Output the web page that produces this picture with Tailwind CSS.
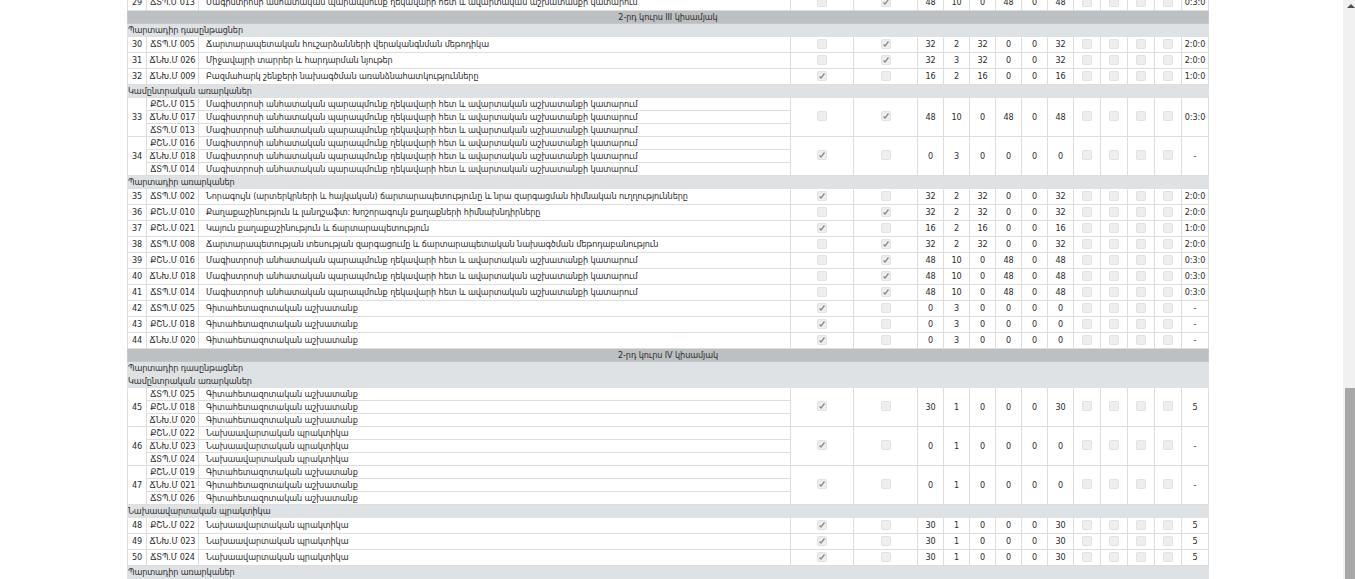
<!DOCTYPE html>
<html lang="hy">
<head>
    <meta charset="UTF-8">
    <title>Ուսումնական պլան</title>
    <script src="https://cdn.jsdelivr.net/npm/@tailwindcss/browser@4"></script>
</head>
<body class="h-screen overflow-hidden bg-white font-['DejaVu_Sans_Condensed','DejaVu_Sans',sans-serif] text-[9px] tracking-[-0.08px] text-[#2b2b2b]">
<div class="flex h-[579px]">
    <div class="h-[579px] w-[1343px] flex-none overflow-hidden pl-[127px]">
        <table class="-mt-[6px] w-[1081px] table-fixed border-collapse">
            <colgroup>
                <col class="w-[19px]"><col class="w-[52px]"><col class="w-[592px]"><col class="w-[63px]"><col class="w-[64px]">
                <col class="w-[26px]"><col class="w-[26px]"><col class="w-[26px]"><col class="w-[26px]"><col class="w-[26px]"><col class="w-[26px]">
                <col class="w-[27px]"><col class="w-[27px]"><col class="w-[27px]"><col class="w-[27px]"><col class="w-[27px]">
            </colgroup>
            <tbody id="plan"></tbody>
        </table>
    </div>
    <div class="relative h-[579px] w-[12px] flex-none bg-[#f1f1f1]">
        <div class="absolute left-[4px] top-[4px] h-0 w-0 border-x-[4px] border-b-[4px] border-x-transparent border-b-[#505050]"></div>
        <div class="absolute bottom-0 left-[2px] right-0 top-[388px] bg-[#a8a8a8]"></div>
    </div>
</div>

<script>
    const thesis = 'Մագիստրոսի անհատական պարապմունք ղեկավարի հետ և ավարտական աշխատանքի կատարում';
    const research = 'Գիտահետազոտական աշխատանք';
    const practice = 'Նախաավարտական պրակտիկա';

    const cell = 'border border-[#ddd] text-center';
    const num = 'border border-[#ddd] text-center font-["Liberation_Sans"] text-[10px] tracking-normal';
    const tick = '<svg viewBox="0 0 8 8" class="block size-[8px]"><path d="M1.500 4.500l1.500 1.500L6.500 1.500" fill="none" stroke="#8a8a8a" stroke-width="1.300"/></svg>';

    function box(on) {
        return `<span class="relative -top-[1px] mx-auto block size-[8px] rounded-[1px] bg-[#eeeeee] shadow-[0_0_0_1px_#e2e2e2]">${on ? tick : ''}</span>`;
    }

    function numbers(r, span) {
        const rs = span ? ` rowspan="${span}"` : '';
        return `<td${rs} class="${cell}">${box(r.a)}</td><td${rs} class="${cell}">${box(!r.a)}</td>`
            + r.n.map(v => `<td${rs} class="${num}">${v}</td>`).join('')
            + `<td${rs} class="${cell}">${box(false)}</td>`.repeat(4)
            + `<td${rs} class="${num}">${r.t}</td>`;
    }

    function row(no, code, name, r) {
        return `<tr class="h-[16px]"><td class="${num}">${no}</td><td class="${cell} whitespace-nowrap">${code}</td><td class="border border-[#ddd] pl-[7px] whitespace-nowrap">${name}</td>${numbers(r)}</tr>`;
    }

    function group(no, items, r) {
        return items.map((it, i) => `<tr class="h-[13px] leading-[12px]">`
            + (i === 0 ? `<td rowspan="3" class="${num}">${no}</td>` : '')
            + `<td class="${cell} whitespace-nowrap">${it[0]}</td><td class="border border-[#ddd] pl-[7px] whitespace-nowrap">${it[1]}</td>`
            + (i === 0 ? numbers(r, 3) : '') + '</tr>').join('');
    }

    const band = t => `<tr class="h-[13px] leading-[12px]"><td colspan="16" class="border border-[#c4c7c9] bg-[#bcc0c2] text-center">${t}</td></tr>`;
    const section = t => `<tr class="h-[13px] leading-[12px]"><td colspan="16" class="border border-[#dfe2e4] bg-[#dfe2e4]">${t}</td></tr>`;

    const h32 = { a: false, n: [32, 2, 32, 0, 0, 32], t: '2:0:0' };
    const h32b = { a: false, n: [32, 3, 32, 0, 0, 32], t: '2:0:0' };
    const h16 = { a: true, n: [16, 2, 16, 0, 0, 16], t: '1:0:0' };
    const h48 = { a: false, n: [48, 10, 0, 48, 0, 48], t: '0:3:0' };
    const h0 = { a: true, n: [0, 3, 0, 0, 0, 0], t: '-' };
    const p30 = { a: true, n: [30, 1, 0, 0, 0, 30], t: '5' };
    const p0 = { a: true, n: [0, 1, 0, 0, 0, 0], t: '-' };

    document.getElementById('plan').innerHTML = [
        row(29, 'ՃՏՊ.Մ 013', thesis, h48),
        band('2-րդ կուրս III կիսամյակ'),
        section('Պարտադիր դասընթացներ'),
        row(30, 'ՃՏՊ.Մ 005', 'Ճարտարապետական հուշարձանների վերականգնման մեթոդիկա', h32),
        row(31, 'ՃՆԽ.Մ 026', 'Միջավայրի տարրեր և հարդարման նյութեր', h32b),
        row(32, 'ՃՆԽ.Մ 009', 'Բազմահարկ շենքերի նախագծման առանձնահատկությունները', h16),
        section('Կամընտրական առարկաներ'),
        group(33, [['ՔՇՆ.Մ 015', thesis], ['ՃՆԽ.Մ 017', thesis], ['ՃՏՊ.Մ 013', thesis]], h48),
        group(34, [['ՔՇՆ.Մ 016', thesis], ['ՃՆԽ.Մ 018', thesis], ['ՃՏՊ.Մ 014', thesis]], h0),
        section('Պարտադիր առարկաներ'),
        row(35, 'ՃՏՊ.Մ 002', 'Նորագույն (արտերկրների և հայկական) ճարտարապետությունը և նրա զարգացման հիմնական ուղղությունները', { ...h32, a: true }),
        row(36, 'ՔՇՆ.Մ 010', 'Քաղաքաշինություն և լանդշաֆտ: Խոշորագույն քաղաքների հիմնախնդիրները', h32),
        row(37, 'ՔՇՆ.Մ 021', 'Կայուն քաղաքաշինություն և ճարտարապետություն', h16),
        row(38, 'ՃՏՊ.Մ 008', 'Ճարտարապետության տեսության զարգացումը և ճարտարապետական նախագծման մեթոդաբանություն', h32),
        row(39, 'ՔՇՆ.Մ 016', thesis, h48),
        row(40, 'ՃՆԽ.Մ 018', thesis, h48),
        row(41, 'ՃՏՊ.Մ 014', thesis, h48),
        row(42, 'ՃՏՊ.Մ 025', research, h0),
        row(43, 'ՔՇՆ.Մ 018', research, h0),
        row(44, 'ՃՆԽ.Մ 020', research, h0),
        band('2-րդ կուրս IV կիսամյակ'),
        section('Պարտադիր դասընթացներ'),
        section('Կամընտրական առարկաներ'),
        group(45, [['ՃՏՊ.Մ 025', research], ['ՔՇՆ.Մ 018', research], ['ՃՆԽ.Մ 020', research]], p30),
        group(46, [['ՔՇՆ.Մ 022', practice], ['ՃՆԽ.Մ 023', practice], ['ՃՏՊ.Մ 024', practice]], p0),
        group(47, [['ՔՇՆ.Մ 019', research], ['ՃՆԽ.Մ 021', research], ['ՃՏՊ.Մ 026', research]], p0),
        section('Նախաավարտական պրակտիկա'),
        row(48, 'ՔՇՆ.Մ 022', practice, p30),
        row(49, 'ՃՆԽ.Մ 023', practice, p30),
        row(50, 'ՃՏՊ.Մ 024', practice, p30),
        section('Պարտադիր առարկաներ')
    ].join('');
</script>
</body>
</html>
